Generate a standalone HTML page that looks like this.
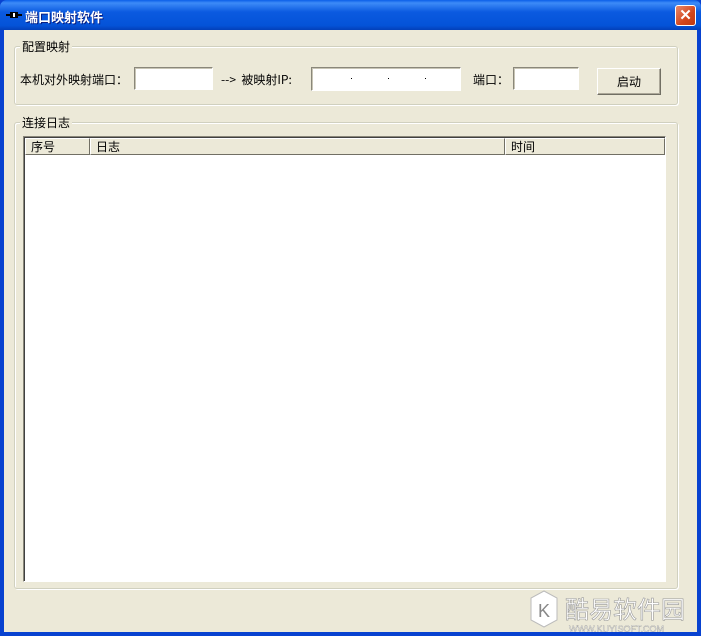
<!DOCTYPE html>
<html><head><meta charset="utf-8"><style>
*{margin:0;padding:0;box-sizing:border-box}
body{width:701px;height:636px;overflow:hidden;background:#0842d0;font-family:"SimSun","Noto Sans CJK SC","Liberation Sans",sans-serif;font-size:12px;color:#000;position:relative}
.title{position:absolute;left:0;top:0;width:701px;height:30px;background:linear-gradient(#0a5fe8 0%,#3d8bf7 10%,#0b5ae0 40%,#0453d8 85%,#0340b8 100%);border-radius:7px 7px 0 0}
.title span{position:absolute;left:25px;top:7px;color:#fff;font-weight:bold;font-size:13px;text-shadow:1px 1px 0 #0a1e80}
.close{position:absolute;left:675px;top:5px;width:21px;height:21px;border:1px solid #fff;border-radius:3px;background:linear-gradient(135deg,#e8886a,#d2461c 60%,#c03a12);color:#fff;font:bold 15px "Liberation Sans",sans-serif;text-align:center;line-height:19px}
.client{position:absolute;left:4px;top:30px;width:693px;height:602px;background:#ece9d8}
.abs{position:absolute}
.grp{position:absolute;border:1px solid #d0d0bf;box-shadow:inset 1px 1px 0 #fff,1px 1px 0 #fff;border-radius:3px}
.glab{position:absolute;background:#ece9d8;padding:0 2px}
.inp{position:absolute;background:#fff;border:1px solid #7f9db9;border-color:#8a877a #fff #fff #8a877a;box-shadow:inset 1px 1px 0 #c8c5b5}
.btn{position:absolute;background:#ece9d8;border:1px solid;border-color:#fff #716f64 #716f64 #fff;box-shadow:inset -1px -1px 0 #aca899;text-align:center;line-height:25px}
.lv{position:absolute;background:#fff;border:1px solid;border-color:#8a877a #fff #fff #8a877a;box-shadow:inset 1px 1px 0 #404040}
.hd{position:absolute;top:1px;height:17px;background:#ece9d8;border:1px solid;border-color:#fff #716f64 #716f64 #fff;padding-left:5px;line-height:15px}
.dot{position:absolute;top:10px;width:1px;height:1px;background:#000}
</style></head><body>
<div class="title"><svg class="abs" style="left:6px;top:10px" width="16" height="10"><rect x="4" y="2" width="8" height="6" fill="#000"/><rect x="0" y="4" width="16" height="2" fill="#000"/><rect x="7" y="3" width="2" height="4" fill="#fff"/></svg><span>端口映射软件</span></div>
<div class="close">✕</div>
<div class="client">
<div class="grp" style="left:10px;top:16px;width:664px;height:59px"></div>
<div class="glab" style="left:16px;top:8px">配置映射</div>
<div class="abs" style="left:16px;top:41px">本机对外映射端口：</div>
<div class="inp" style="left:130px;top:37px;width:79px;height:23px"></div>
<div class="abs" style="left:217px;top:41px">--&gt;&nbsp; 被映射IP:</div>
<div class="inp" style="left:307px;top:37px;width:150px;height:24px"><span class="dot" style="left:39px"></span><span class="dot" style="left:76px"></span><span class="dot" style="left:113px"></span></div>
<div class="abs" style="left:469px;top:41px">端口：</div>
<div class="inp" style="left:509px;top:37px;width:66px;height:23px"></div>
<div class="btn" style="left:593px;top:38px;width:64px;height:27px">启动</div>
<div class="grp" style="left:10px;top:92px;width:664px;height:467px"></div>
<div class="glab" style="left:16px;top:84px">连接日志</div>
<div class="lv" style="left:19px;top:106px;width:643px;height:446px">
<div class="hd" style="left:1px;width:65px">序号</div>
<div class="hd" style="left:66px;width:415px">日志</div>
<div class="hd" style="left:481px;width:160px">时间</div>
</div>
<svg class="abs" style="left:517px;top:555px" width="176" height="47"><polygon points="23,6 36,13 36,35 23,42 10,35 10,13" fill="#fff" stroke="#bbb"/><text x="17" y="32" font-size="18" fill="#888" font-family="Liberation Sans">K</text><text x="44" y="33" font-size="24" fill="#fff" stroke="#999" stroke-width="0.6" font-family="Noto Sans CJK SC,sans-serif">酷易软件园</text><text x="48" y="47" font-size="9" fill="#fff" stroke="#888" stroke-width="0.3" font-family="Liberation Sans">WWW.KUYISOFT.COM</text></svg>
</div>
</body></html>
